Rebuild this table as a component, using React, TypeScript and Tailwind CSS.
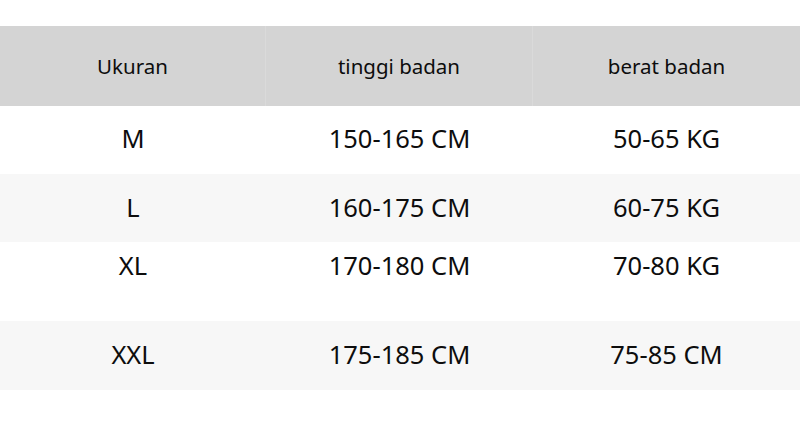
export default function App() {
  const rows = [
    { s: "M", h: "150-165 CM", w: "50-65 KG", bg: "bg-white", cls: "h-[68px] items-center pb-[3px]" },
    { s: "L", h: "160-175 CM", w: "60-75 KG", bg: "bg-[#f7f7f7]", cls: "h-[68px] items-center pb-[2px]" },
    { s: "XL", h: "170-180 CM", w: "70-80 KG", bg: "bg-white", cls: "h-[79px] items-start pt-[4px]" },
    { s: "XXL", h: "175-185 CM", w: "75-85 CM", bg: "bg-[#f7f7f7]", cls: "h-[69px] items-center pb-[3px]" },
  ];
  return (
    <div className="w-[800px] h-[445px] bg-white pt-[26px] text-[#0d0d0d]" style={{ fontFamily: '"Noto Sans", "Open Sans", sans-serif' }}>
      <div className="grid grid-cols-[266px_267px_267px] h-[80px] bg-[#d4d4d4] text-[20.5px]">
        <div className="flex items-center justify-center border-r border-[#dadada]">Ukuran</div>
        <div className="flex items-center justify-center border-r border-[#dadada]">tinggi badan</div>
        <div className="flex items-center justify-center">berat badan</div>
      </div>
      {rows.map((r) => (
        <div key={r.s} className={`grid grid-cols-[266px_267px_267px] ${r.bg} text-[25.5px]`}>
          <div className={`flex justify-center ${r.cls}`}>{r.s}</div>
          <div className={`flex justify-center ${r.cls}`}>{r.h}</div>
          <div className={`flex justify-center ${r.cls}`}>{r.w}</div>
        </div>
      ))}
    </div>
  );
}
